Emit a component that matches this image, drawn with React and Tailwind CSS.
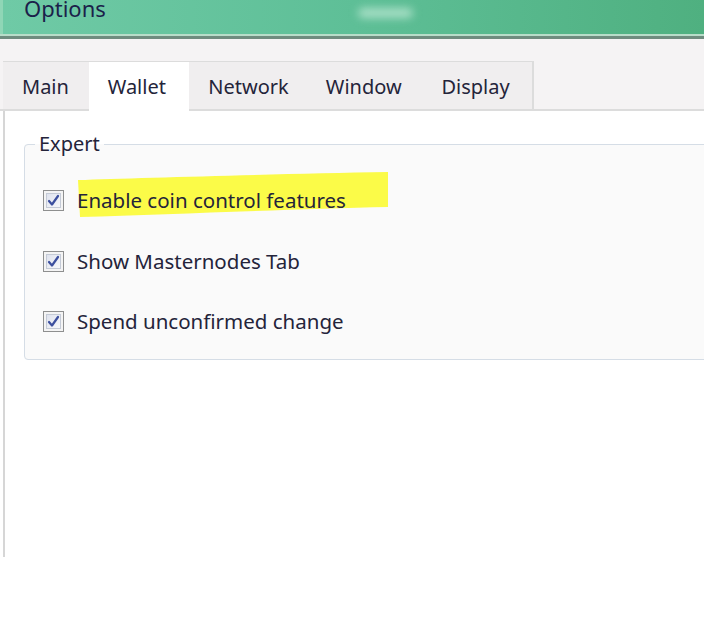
const tabs = [
  { label: "Main", w: "w-[86px]" },
  { label: "Wallet", w: "w-[101px]", active: true },
  { label: "Network", w: "w-[118px]" },
  { label: "Window", w: "w-[116px]" },
  { label: "Display", w: "w-[110px]" },
];

const options = [
  { label: "Enable coin control features", marked: true },
  { label: "Show Masternodes Tab" },
  { label: "Spend unconfirmed change" },
];

const CheckBox = () => (
  <div className="w-[21px] h-[21px] border border-[#8e8f8f] bg-[#f4f4f4] p-[2px] shrink-0">
    <div className="w-full h-full border border-[#c4cad6] bg-gradient-to-br from-[#dfe3ee] to-[#f6f7fa] flex items-center justify-center">
      <svg width="13" height="13" viewBox="0 0 13 13">
        <path d="M2 7 L5 10.5 L11 2" fill="none" stroke="#3c4f9e" strokeWidth="2.2" strokeLinecap="round" strokeLinejoin="round" />
      </svg>
    </div>
  </div>
);

export default function App() {
  return (
    <div className="w-[704px] h-[624px] bg-white overflow-hidden" style={{ fontFamily: '"Noto Sans", "Open Sans", sans-serif' }}>
      {/* title bar */}
      <div className="relative h-[34px] bg-gradient-to-r from-[#6fcaa6] via-[#5ebf97] to-[#4fb080] border-l-[3px] border-[#8fd6b6] overflow-hidden">
        <div className="absolute left-[355px] top-[8px] w-[55px] h-[10px] rounded-full bg-[#a8dfc6] blur-[4px]" />
        <span className="block pl-[21px] -mt-[7px] text-[22px] leading-[30px] text-[#1b1f4a]">Options</span>
      </div>
      <div className="h-[2px] bg-[#b8ddc9]" />
      <div className="h-[3px] bg-[#6f8c7f]" />

      {/* tab strip */}
      <div className="bg-[#f5f3f4] pt-[22px] border-b-2 border-[#dcdcdc]">
        <div className="flex items-start ml-[3px] w-[531px] h-[48px] border-t border-r-2 border-[#dcdcdc] bg-[#f0eeef]">
          {tabs.map((t) => (
            <div
              key={t.label}
              className={`${t.w} h-[47px] pl-[19px] pt-[2px] flex items-center text-[20px] text-[#24243a] ${t.active ? "relative bg-white h-[49px] pb-[2px]" : ""}`}
            >
              {t.label}
            </div>
          ))}
        </div>
      </div>

      {/* page */}
      <div className="ml-[3px] h-[446px] border-l-2 border-[#d6d6d6] bg-white pt-[21px] pl-[19px]">
        <fieldset className="w-[720px] border border-[#d5dde6] rounded-[4px] bg-[#fafafa] pt-[34px] pb-[27px]">
          <legend className="ml-[10px] px-[4px] text-[20px] leading-[24px] text-[#24243a]">Expert</legend>
          <div className="flex flex-col gap-[39.5px] pl-[18px]">
            {options.map((o) => (
              <div key={o.label} className="relative flex items-center h-[21px] leading-[21px] gap-[13px] text-[20.5px] text-[#24243a]">
                {o.marked && (
                  <svg className="absolute left-[33px] top-[-18px]" width="314" height="46" viewBox="0 0 314 46">
                    <path d="M2 8 C60 6 200 2 312 0 L312 35 C220 37 100 42 4 45 Z" fill="#fbfb48" />
                  </svg>
                )}
                <CheckBox />
                <span className="relative">{o.label}</span>
              </div>
            ))}
          </div>
        </fieldset>
      </div>
    </div>
  );
}
